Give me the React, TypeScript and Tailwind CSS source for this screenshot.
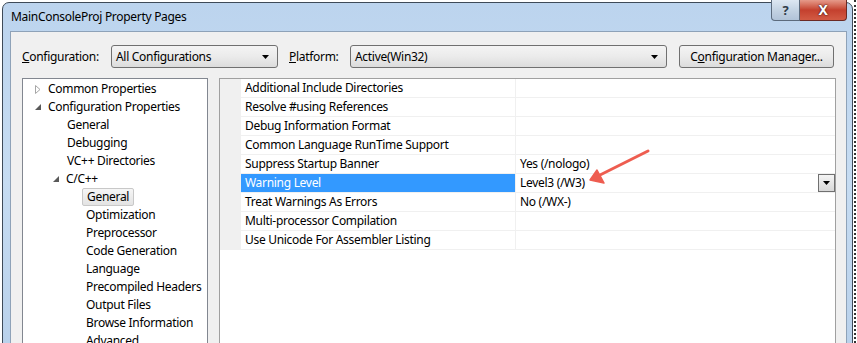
import React from "react";

const font = { fontFamily: '"Segoe UI", "Noto Sans", sans-serif' };

const Collapsed = () => (
  <svg width="6" height="9" viewBox="0 0 6 9" className="shrink-0">
    <path d="M0.5 0.5 L5 4.5 L0.5 8.5 Z" fill="white" stroke="#a6a6a6" />
  </svg>
);

const Expanded = () => (
  <svg width="6" height="6" viewBox="0 0 6 6" className="shrink-0">
    <path d="M6 0 L6 6 L0 6 Z" fill="#595959" />
  </svg>
);

const ComboArrow = () => (
  <svg width="7" height="4" viewBox="0 0 7 4">
    <path d="M0 0 L7 0 L3.5 4 Z" fill="#000" />
  </svg>
);

function Combo({ value, width }: { value: string; width: string }) {
  return (
    <div
      className={`${width} h-[23px] flex items-center justify-between pl-[4px] pr-[8px] rounded-[3px] border border-[#707070] bg-gradient-to-b from-[#f4f4f4] via-[#ebebeb] to-[#dcdcdc]`}
    >
      <span>{value}</span>
      <ComboArrow />
    </div>
  );
}

type TreeItem = { label: string; indent: string; icon?: "c" | "e"; selected?: boolean };

const tree: TreeItem[] = [
  { label: "Common Properties", indent: "pl-[12px]", icon: "c" },
  { label: "Configuration Properties", indent: "pl-[12px]", icon: "e" },
  { label: "General", indent: "pl-[44px]" },
  { label: "Debugging", indent: "pl-[44px]" },
  { label: "VC++ Directories", indent: "pl-[44px]" },
  { label: "C/C++", indent: "pl-[30px]", icon: "e" },
  { label: "General", indent: "pl-[59px]", selected: true },
  { label: "Optimization", indent: "pl-[63px]" },
  { label: "Preprocessor", indent: "pl-[63px]" },
  { label: "Code Generation", indent: "pl-[63px]" },
  { label: "Language", indent: "pl-[63px]" },
  { label: "Precompiled Headers", indent: "pl-[63px]" },
  { label: "Output Files", indent: "pl-[63px]" },
  { label: "Browse Information", indent: "pl-[63px]" },
  { label: "Advanced", indent: "pl-[63px]" },
];

const props: { name: string; value?: string; active?: boolean }[] = [
  { name: "Additional Include Directories" },
  { name: "Resolve #using References" },
  { name: "Debug Information Format" },
  { name: "Common Language RunTime Support" },
  { name: "Suppress Startup Banner", value: "Yes (/nologo)" },
  { name: "Warning Level", value: "Level3 (/W3)", active: true },
  { name: "Treat Warnings As Errors", value: "No (/WX-)" },
  { name: "Multi-processor Compilation" },
  { name: "Use Unicode For Assembler Listing" },
];

export default function App() {
  return (
    <div
      className="relative w-[857px] h-[343px] overflow-hidden bg-white flex text-[12px] tracking-[-0.3px] text-black leading-none whitespace-nowrap"
      style={font}
    >
      {/* window */}
      <div className="ml-[2px] mt-[2px] w-[851px] h-[360px] flex flex-col rounded-t-[7px] border border-[#3e4a58] bg-gradient-to-b from-[#bcd4ee] via-[#c6dcf2] to-[#b8d0ea] pl-[7px] pr-[5px]">
        {/* title bar */}
        <div className="h-[28px] flex items-start shrink-0">
          <span className="mt-[8px] ml-[1px]">MainConsoleProj Property Pages</span>
          <div className="ml-auto -mt-[3px] mr-[0px] flex">
            <div className="w-[29px] h-[21px] flex items-center justify-center rounded-bl-[4px] border border-[#5c6b7d] border-t-0 bg-gradient-to-b from-[#dde7f2] via-[#c4d3e3] to-[#b1c3d8] text-[#2f3b48] text-[13px] font-bold">
              ?
            </div>
            <div className="w-[47px] h-[21px] flex items-center justify-center rounded-br-[4px] border border-l-0 border-t-0 border-[#6b2a24] bg-gradient-to-b from-[#e59a8a] via-[#c4402e] to-[#d25a44] text-white text-[14px] font-bold">
              <span style={{ textShadow: "0 0 2px #3a1510, 0 0 1px #3a1510" }}>X</span>
            </div>
          </div>
        </div>

        {/* client area */}
        <div className="flex-1 flex flex-col bg-[#f0f0f0] border border-[#8ea2b8] pl-[11px] pt-[13px]">
          <div className="flex items-center h-[23px]">
            <span className="w-[89px]">
              <span className="underline">C</span>onfiguration:
            </span>
            <Combo value="All Configurations" width="w-[167px]" />
            <span className="ml-[11px] w-[61px]">
              <span className="underline">P</span>latform:
            </span>
            <Combo value="Active(Win32)" width="w-[317px]" />
            <div className="ml-[12px] w-[155px] h-[23px] flex items-center justify-center rounded-[3px] border border-[#707070] bg-gradient-to-b from-[#f4f4f4] via-[#ebebeb] to-[#dcdcdc]">
              C<span className="underline">o</span>nfiguration Manager...
            </div>
          </div>

          <div className="flex mt-[10px] flex-1 gap-[11px]">
            {/* tree */}
            <div className="w-[186px] border border-[#828790] bg-white pt-[1px]">
              {tree.map((t, i) => (
                <div key={i} className={`h-[18px] flex items-center ${t.indent}`}>
                  {t.icon && (
                    <span className="w-[13px] flex items-center">
                      {t.icon === "c" ? <Collapsed /> : <Expanded />}
                    </span>
                  )}
                  {t.selected ? (
                    <span className="h-[18px] px-[4px] flex items-center rounded-[2px] border border-[#c8c8c8] bg-gradient-to-b from-[#f6f6f6] to-[#e3e3e3]">
                      {t.label}
                    </span>
                  ) : (
                    <span>{t.label}</span>
                  )}
                </div>
              ))}
            </div>

            {/* property grid */}
            <div className="w-[617px] border border-[#a0a0a0] bg-white">
              {props.map((p, i) => (
                <div key={i} className="h-[19px] flex border-b border-[#f0f0f0]">
                  <div className="w-[21px] bg-[#f0f0f0]" />
                  <div
                    className={`w-[275px] flex items-center pl-[4px] border-r border-[#f0f0f0] ${
                      p.active ? "bg-[#3399ff] text-white" : ""
                    }`}
                  >
                    {p.name}
                  </div>
                  <div className="flex-1 flex items-center pl-[4px]">
                    {p.value}
                    {p.active && (
                      <div className="ml-auto w-[17px] h-[18px] flex items-center justify-center border border-[#707070] bg-gradient-to-b from-[#f4f4f4] to-[#d8d8d8]">
                        <ComboArrow />
                      </div>
                    )}
                  </div>
                </div>
              ))}
            </div>
          </div>
        </div>
      </div>

      {/* selection marquee edge */}
      <div className="ml-[1px] w-[3px] h-full border-l-2 border-dotted border-[#333]" />

      {/* annotation arrow */}
      <svg className="absolute left-0 top-0 pointer-events-none" width="857" height="343">
        <line x1="648" y1="151" x2="600" y2="175" stroke="#ee5d50" strokeWidth="3" strokeLinecap="round" />
        <path d="M590 180 L597 170 L604 183 Z" fill="#ee5d50" stroke="#ee5d50" strokeWidth="1.5" strokeLinejoin="round" />
      </svg>
    </div>
  );
}
